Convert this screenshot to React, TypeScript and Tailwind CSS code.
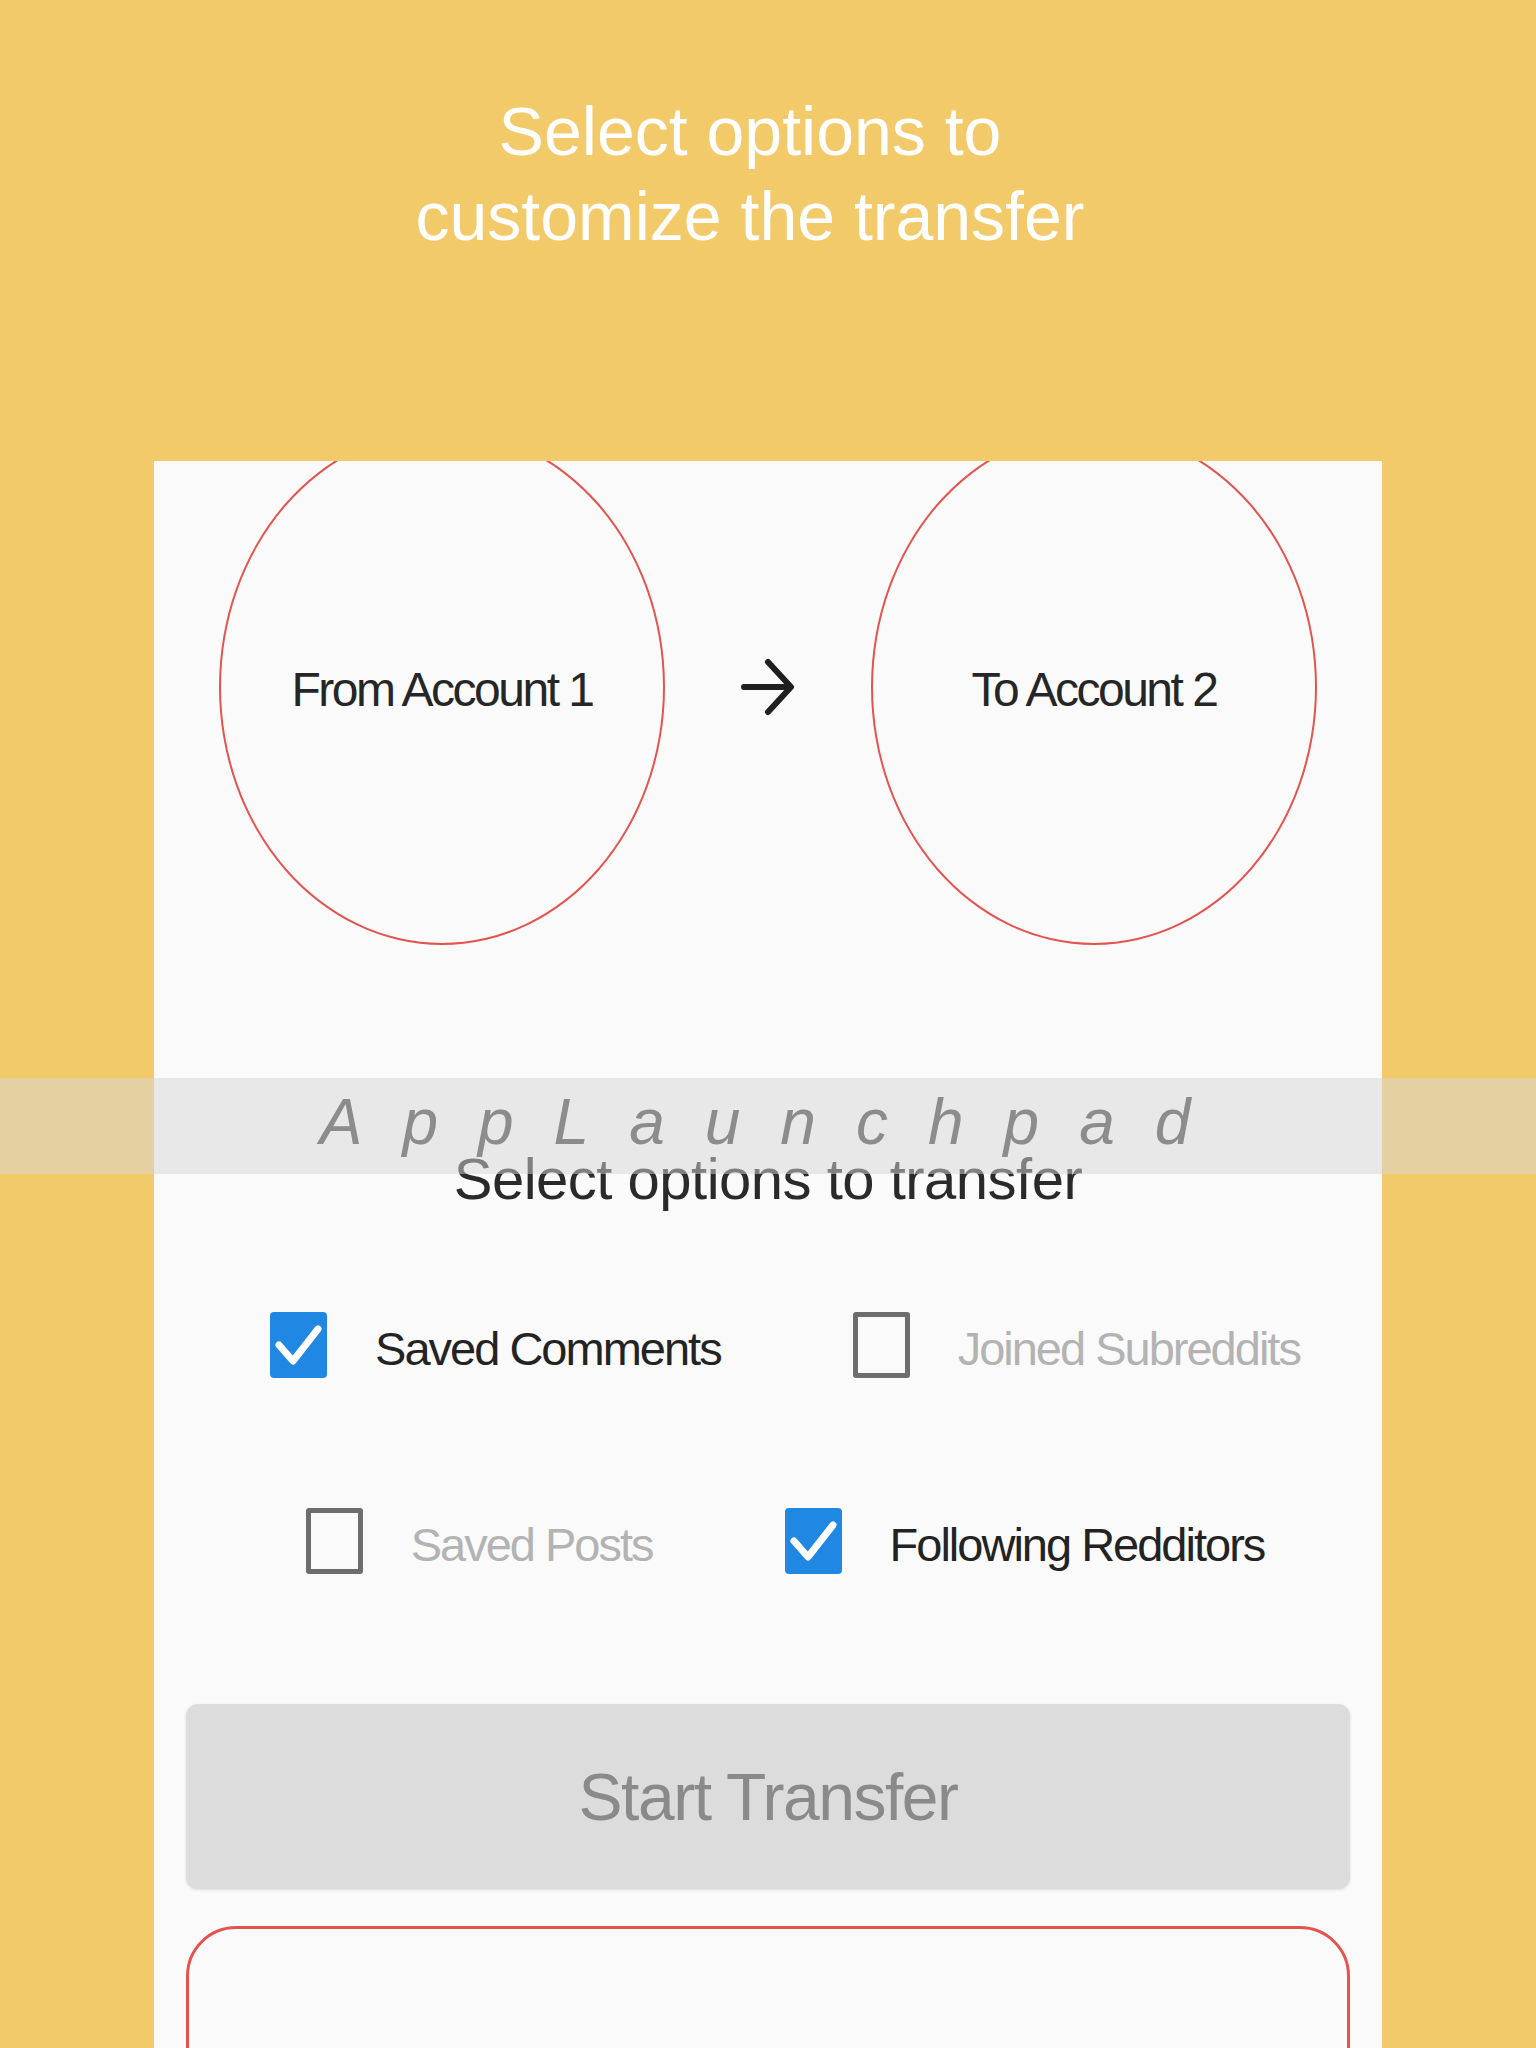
import React from 'react';

const options = [
  [
    { label: 'Saved Comments', checked: true },
    { label: 'Joined Subreddits', checked: false },
  ],
  [
    { label: 'Saved Posts', checked: false },
    { label: 'Following Redditors', checked: true },
  ],
];

const CheckBox = ({ checked }: { checked: boolean }) =>
  checked ? (
    <div className="h-[66px] w-[57px] shrink-0 rounded-[4px] bg-[#2088e2]">
      <svg viewBox="0 0 57 66" className="h-full w-full">
        <polyline
          points="9,33 23,49 48,17"
          fill="none"
          stroke="#ffffff"
          strokeWidth="7"
          strokeLinecap="round"
          strokeLinejoin="round"
        />
      </svg>
    </div>
  ) : (
    <div className="h-[66px] w-[57px] shrink-0 rounded-[3px] border-[5px] border-[#6d6d6d]" />
  );

const AccountBubble = ({ label }: { label: string }) => (
  <div className="flex h-[516px] w-[446px] shrink-0 items-center justify-center rounded-[50%] border-[2.5px] border-[#e4534d]">
    <span className="mt-[6px] text-[48px] leading-none tracking-[-2.5px] text-[#262626]">{label}</span>
  </div>
);

export default function App() {
  return (
    <div className="relative h-[2048px] overflow-hidden bg-[#f2ca6a] font-['Liberation_Sans',Arial,sans-serif]">
      {/* Title */}
      <h1 className="pr-[36px] pt-[89px] text-center text-[68px] font-normal leading-[85px] text-white">
        Select options to
        <br />
        customize the transfer
      </h1>

      {/* Phone screenshot card */}
      <div className="mx-[154px] mt-[202px] h-[1587px] overflow-hidden bg-[#fafafa]">
        {/* Accounts */}
        <div className="mt-[-32px] flex items-center justify-between px-[65px]">
          <AccountBubble label="From Account 1" />
          <svg viewBox="0 0 56 60" className="h-[60px] w-[56px]">
            <path
              d="M4 30 H50 M28 5 L51 30 L28 55"
              fill="none"
              stroke="#1f1f1f"
              strokeWidth="6"
              strokeLinecap="round"
              strokeLinejoin="round"
            />
          </svg>
          <AccountBubble label="To Account 2" />
        </div>

        <h2 className="mt-[205px] h-[58px] text-center text-[58px] leading-none tracking-[-0.5px] text-[#2a2a2a]">
          Select options to transfer
        </h2>

        {/* Options */}
        <div className="mt-[104px] flex flex-col gap-[130px]">
          {options.map((row, i) => (
            <div key={i} className="flex h-[66px] items-center justify-center gap-[132px] pl-[34px]">
              {row.map((opt) => (
                <div key={opt.label} className="flex items-center gap-[48px]">
                  <CheckBox checked={opt.checked} />
                  <span
                    className={
                      'mt-[6px] whitespace-nowrap text-[47px] leading-none tracking-[-2px] ' +
                      (opt.checked ? 'text-[#232323]' : 'text-[#b3b3b3]')
                    }
                  >
                    {opt.label}
                  </span>
                </div>
              ))}
            </div>
          ))}
        </div>

        {/* Start button */}
        <div className="mx-[32px] mt-[130px] flex h-[185px] items-center justify-center rounded-[12px] bg-[#dcdcdc] shadow-[0_1px_3px_rgba(0,0,0,0.12)]">
          <span className="text-[66px] leading-none tracking-[-1.5px] text-[#8a8a8a]">Start Transfer</span>
        </div>

        <div className="mx-[32px] mt-[37px] h-[400px] rounded-[50px] border-[3px] border-[#e4534d]" />
      </div>

      {/* Watermark band */}
      <div className="absolute left-0 right-0 top-[1078px] flex h-[96px] items-center justify-center bg-[#d5d6d6]/50">
        <span className="mt-[-8px] pl-[14px] text-[64px] italic leading-none tracking-[40px] text-[#8c8c8c]">
          AppLaunchpad
        </span>
      </div>
    </div>
  );
}
